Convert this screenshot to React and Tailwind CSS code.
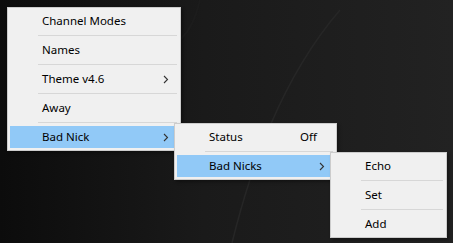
import React from 'react'

const font = { fontFamily: '"Noto Sans", "Open Sans", sans-serif' }

const Chevron = () => (
  <svg width="6" height="9" viewBox="0 0 6 9" className="text-[#333]">
    <path d="M1 1 L4.5 4.5 L1 8" fill="none" stroke="currentColor" strokeWidth="1.1" />
  </svg>
)

const Item = ({ label, right, sub, active }) => (
  <div
    className={`h-[22px] flex items-center pl-[32px] pr-[8px] ${active ? 'bg-[#91c9f7]' : ''}`}
  >
    <span className="flex-1 text-[11.5px] leading-none text-black">{label}</span>
    {right && <span className="text-[11.5px] leading-none text-black mr-[9px]">{right}</span>}
    {sub && <span className="mr-[1px] flex items-center"><Chevron /></span>}
  </div>
)

const Sep = () => (
  <div className="h-[7px] flex items-center pl-[28px] pr-[1px]">
    <div className="h-px w-full bg-[#d7d7d7]" />
  </div>
)

const Menu = ({ items, className }) => (
  <div
    className={`absolute bg-[#f0f0f0] border border-[#cccccc] p-[2px] shadow-[2px_2px_3px_rgba(0,0,0,0.35)] ${className}`}
    style={font}
  >
    {items.map((it, i) => (
      <React.Fragment key={it.label}>
        {i > 0 && <Sep />}
        <Item {...it} />
      </React.Fragment>
    ))}
  </div>
)

export default function App() {
  return (
    <div className="relative w-[453px] h-[243px] overflow-hidden bg-[#202020]">
      {/* backdrop */}
      <svg className="absolute inset-0" width="453" height="243" viewBox="0 0 453 243">
        <defs>
          <linearGradient id="shade" x1="0" y1="0" x2="1" y2="0">
            <stop offset="0" stopColor="#0c0c0c" />
            <stop offset="0.45" stopColor="#1a1a1a" />
            <stop offset="1" stopColor="#222222" />
          </linearGradient>
        </defs>
        <rect width="453" height="243" fill="url(#shade)" />
        <path d="M232 243 C 250 170, 280 80, 340 10" fill="none" stroke="#262626" strokeWidth="1.5" />
        <path d="M180 40 C 190 30, 195 20, 200 0" fill="none" stroke="#1c1c1c" strokeWidth="2" />
      </svg>

      <Menu
        className="left-[7px] top-[7px] w-[174px]"
        items={[
          { label: 'Channel Modes' },
          { label: 'Names' },
          { label: 'Theme v4.6', sub: true },
          { label: 'Away' },
          { label: 'Bad Nick', sub: true, active: true },
        ]}
      />
      <Menu
        className="left-[174px] top-[123px] w-[163px]"
        items={[
          { label: 'Status', right: 'Off' },
          { label: 'Bad Nicks', sub: true, active: true },
        ]}
      />
      <Menu
        className="left-[330px] top-[152px] w-[117px]"
        items={[{ label: 'Echo' }, { label: 'Set' }, { label: 'Add' }]}
      />
    </div>
  )
}
